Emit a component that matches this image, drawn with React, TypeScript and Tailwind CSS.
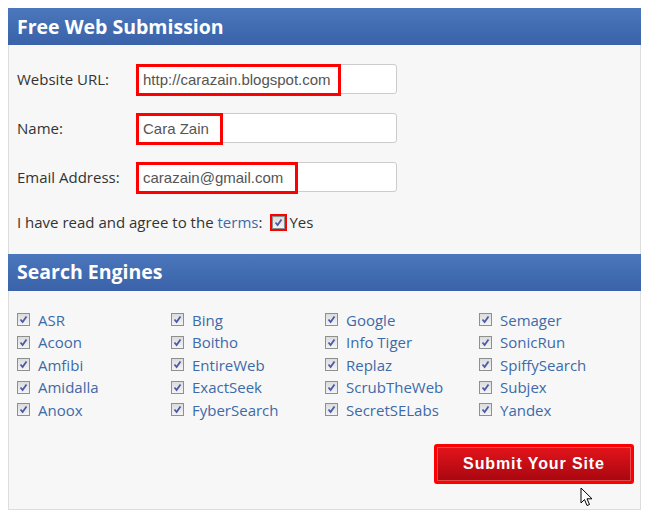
const engines = [
  ["ASR", "Acoon", "Amfibi", "Amidalla", "Anoox"],
  ["Bing", "Boitho", "EntireWeb", "ExactSeek", "FyberSearch"],
  ["Google", "Info Tiger", "Replaz", "ScrubTheWeb", "SecretSELabs"],
  ["Semager", "SonicRun", "SpiffySearch", "Subjex", "Yandex"],
];

function Check() {
  return (
    <span className="inline-flex h-[13px] w-[13px] items-center justify-center border border-[#8e8f8f] bg-gradient-to-b from-[#dcdcdc] to-[#f4f4f4]">
      <svg width="9" height="9" viewBox="0 0 9 9">
        <path d="M1.5 4.5 L3.6 7 L7.5 1.5" fill="none" stroke="#4a5aa8" strokeWidth="1.8" />
      </svg>
    </span>
  );
}

function Header({ title }: { title: string }) {
  return (
    <div className="-mx-px flex h-[37px] items-center bg-gradient-to-b from-[#4b77bd] to-[#3a62a8] px-[9px] text-[19.5px] font-bold text-white">
      {title}
    </div>
  );
}

function Field({ label, value, hw }: { label: string; value: string; hw: string }) {
  return (
    <div className="flex h-[30px] items-center">
      <div className="w-[127px] pl-[8px] text-[15px] text-[#333]">{label}</div>
      <div className="relative h-[30px] w-[261px] rounded-[3px] border border-[#ccc] bg-white">
        <div
          className={`absolute -left-px -top-px flex h-[32px] items-center border-[3px] border-[#f00] pl-[4px] font-['Liberation_Sans',sans-serif] text-[15px] text-[#555] ${hw}`}
        >
          {value}
        </div>
      </div>
    </div>
  );
}

export default function App() {
  return (
    <div className="min-h-[521px] bg-white p-2 font-['Open_Sans',sans-serif]">
      <div className="relative h-[502px] w-[633px] border-x border-b border-[#ddd] bg-[#f7f7f7]">
        <Header title="Free Web Submission" />
        <div className="flex flex-col gap-[19px] pt-[19px]">
          <Field label="Website URL:" value="http://carazain.blogspot.com" hw="w-[205px]" />
          <Field label="Name:" value="Cara Zain" hw="w-[87px]" />
          <Field label="Email Address:" value="carazain@gmail.com" hw="w-[162px]" />
        </div>
        <div className="flex items-center pl-[8px] pt-[19px] text-[15px] text-[#333]">
          I have read and agree to the&nbsp;<span className="text-[#3d6aa8]">terms</span>:
          <span className="ml-[8px] mr-[2px] flex h-[17px] w-[17px] items-center justify-center bg-[#f00]">
            <Check />
          </span>
          Yes
        </div>
        <div className="mt-[20px]">
          <Header title="Search Engines" />
        </div>
        <div className="grid grid-cols-[154px_154px_154px_154px] pl-[8px] pt-[18px]">
          {engines.map((col, i) => (
            <div key={i} className="flex flex-col">
              {col.map((name) => (
                <div key={name} className="flex h-[22.5px] items-center gap-[8px] text-[15px] text-[#3d6aa8]">
                  <Check />
                  {name}
                </div>
              ))}
            </div>
          ))}
        </div>
        <div className="flex justify-end pr-[6px] pt-[23px]">
          <button className="h-[40px] w-[200px] rounded-[3px] border-[3px] border-[#f00] bg-gradient-to-b from-[#e4141b] to-[#a80710] font-['Liberation_Sans',sans-serif] text-[16px] font-bold tracking-[0.9px] text-white shadow-[inset_0_0_0_1px_rgba(255,120,120,0.6)]">
            Submit Your Site
          </button>
        </div>
        <svg className="absolute left-[571px] top-[479px]" width="14" height="20" viewBox="0 0 14 20">
          <path d="M1 1 L1 16 L4.5 12.5 L7 18.5 L9.5 17.5 L7 11.8 L12 11.8 Z" fill="#fff" stroke="#000" strokeWidth="1" />
        </svg>
      </div>
    </div>
  );
}
